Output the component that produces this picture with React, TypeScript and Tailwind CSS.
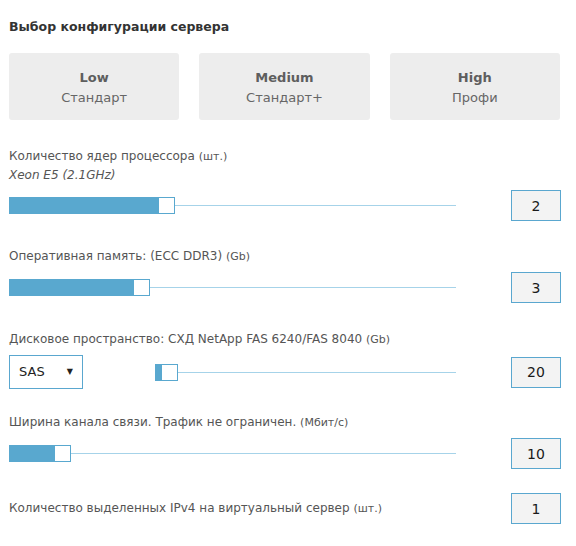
type Row = {
    label: string
    unit: string
    sub?: string
    value: number
    fill: number
    gap: string
    select?: boolean
}

const rows: Row[] = [
    { label: "Количество ядер процессора", unit: "(шт.)", sub: "Xeon E5 (2.1GHz)", value: 2, fill: 149, gap: "mt-[27px]" },
    { label: "Оперативная память: (ECC DDR3)", unit: "(Gb)", value: 3, fill: 124, gap: "mt-[26px]" },
    { label: "Дисковое пространство: СХД NetApp FAS 6240/FAS 8040", unit: "(Gb)", value: 20, fill: 6, select: true, gap: "mt-[27px]" },
    { label: "Ширина канала связи. Трафик не ограничен.", unit: "(Мбит/с)", value: 10, fill: 45, gap: "mt-[24px]" },
]

const plans = [
    { name: "Low", desc: "Стандарт" },
    { name: "Medium", desc: "Стандарт+" },
    { name: "High", desc: "Профи" },
]

function Slider({ fill }: { fill: number }) {
    return (
        <div className="relative flex-1 h-[17px] flex items-center">
            <div className="w-full h-px bg-[#a6d3e9]" />
            <div className="absolute left-0 top-0 h-[17px] flex">
                <div className="h-full bg-[#59a8cf]" style={{ width: fill }} />
                <div className="h-full w-[17px] bg-white border-[1.5px] border-[#59a8cf]" />
            </div>
        </div>
    )
}

function ValueBox({ value }: { value: number }) {
    return (
        <div className="w-[50px] h-[31px] shrink-0 border border-[#5aa7cf] bg-[#f3f3f3] flex items-center justify-center text-[14px] text-[#1a1a1a]">
            {value}
        </div>
    )
}

export default function App() {
    return (
        <div className="w-[576px] h-[546px] bg-white pl-[9px] pr-[15px] pt-[18px] text-[#555] font-['DejaVu_Sans',sans-serif] text-[12px] leading-[18px]">
            <h2 className="text-[12.5px] font-bold text-[#333]">Выбор конфигурации сервера</h2>

            <div className="grid grid-cols-3 gap-5 mt-[17px] pr-px">
                {plans.map((p) => (
                    <div key={p.name} className="h-[67px] rounded-[3px] bg-[#ededed] flex flex-col items-center justify-center pt-[3px] text-[#666]">
                        <span className="font-bold text-[13px] text-[#5e5e5e]">{p.name}</span>
                        <span className="text-[13px] mt-[2px]">{p.desc}</span>
                    </div>
                ))}
            </div>

            {rows.map((r) => (
                <div key={r.label} className={r.gap}>
                    <div>
                        {r.label} <span className="text-[11px]">{r.unit}</span>
                    </div>
                    {r.sub ? <div className="italic">{r.sub}</div> : null}
                    <div className="flex items-center mt-[6px]">
                        <div className="flex-1 flex items-center">
                            {r.select ? (
                                <>
                                    <div className="w-[74px] h-[34px] border border-[#5aa7cf] flex items-center justify-between pl-[9px] pr-[9px] text-[13px] text-[#222]">
                                        <span>SAS</span>
                                        <span className="text-[8px] leading-none">▼</span>
                                    </div>
                                    <div className="w-[72px]" />
                                </>
                            ) : null}
                            <Slider fill={r.fill} />
                        </div>
                        <div className="w-[55px]" />
                        <ValueBox value={r.value} />
                    </div>
                </div>
            ))}

            <div className="flex items-center justify-between mt-[24px]">
                <div>
                    Количество выделенных IPv4 на виртуальный сервер <span className="text-[11px]">(шт.)</span>
                </div>
                <ValueBox value={1} />
            </div>
        </div>
    )
}
